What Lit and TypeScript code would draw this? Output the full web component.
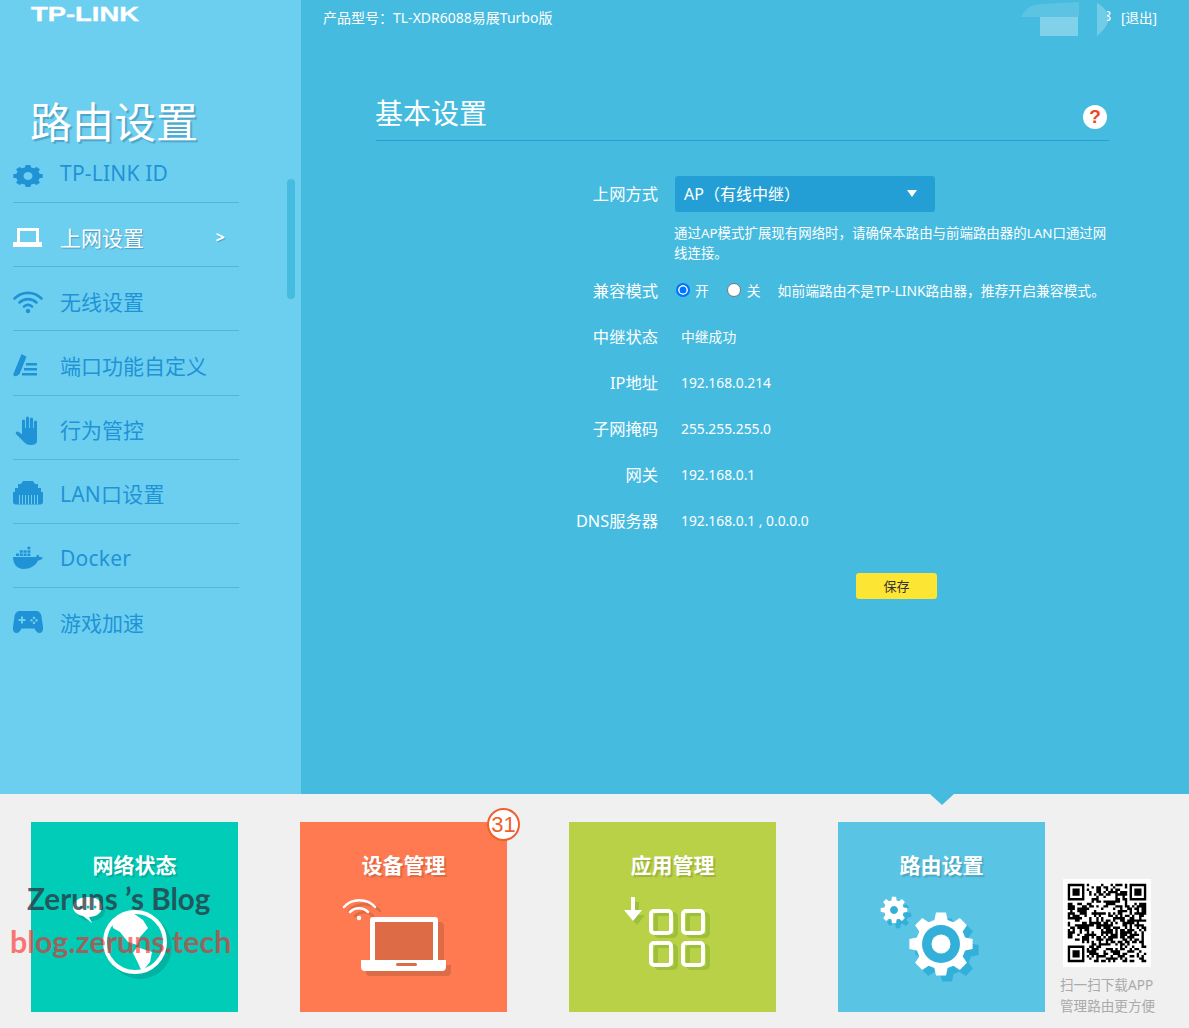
import { LitElement, html, css, svg } from 'lit';
import { customElement } from 'lit/decorators.js';

// toothed wheel outline, centre cut out by the caller
function gear(cx: number, cy: number, r: number, root: number, teeth: number, sy = 1) {
  const step = (Math.PI * 2) / teeth;
  let d = '';
  for (let i = 0; i < teeth; i++) {
    const a = i * step - Math.PI / 2;
    const pts: [number, number][] = [
      [root, a - step * 0.34],
      [r, a - step * 0.2],
      [r, a + step * 0.2],
      [root, a + step * 0.34],
    ];
    for (const [rad, t] of pts) {
      const x = cx + rad * Math.cos(t);
      const y = cy + rad * Math.sin(t) * sy;
      d += (d ? 'L' : 'M') + x.toFixed(1) + ' ' + y.toFixed(1);
    }
  }
  return d + 'Z';
}

function qrModules() {
  const n = 33;
  let seed = 4127;
  let d = '';
  const finder = (x: number, y: number) => x < 8 && y < 8;
  for (let y = 0; y < n; y++) {
    for (let x = 0; x < n; x++) {
      if (finder(x, y) || finder(n - 1 - x, y) || finder(x, n - 1 - y)) continue;
      seed = (seed * 1103515245 + 12345) & 0x7fffffff;
      if ((seed >> 16) % 100 < 52) d += `M${x} ${y}h1v1h-1z`;
    }
  }
  const eye = (x: number, y: number) =>
    `M${x} ${y}h7v7h-7zM${x + 1} ${y + 1}v5h5v-5zM${x + 2} ${y + 2}h3v3h-3z`;
  return d + eye(0, 0) + eye(n - 7, 0) + eye(0, n - 7);
}

const menuIcons = {
  id: svg`<path fill-rule="evenodd" d="${gear(15, 15, 15, 12, 8, 0.74)} M15 11a4.500 4 0 1 0 .01 0Z"/>`,
  net: svg`<path fill-rule="evenodd" d="M4 3h22v14h3v5H0v-5h4ZM7 6v11h16V6Z"/>`,
  wifi: svg`<g fill="none" stroke="currentColor" stroke-width="2.6" stroke-linecap="round">
    <path d="M1.5 9.5C9 2 21 2 28.5 9.5"/><path d="M6.5 13.5c5-4.5 12-4.5 17 0"/><path d="M11 17.5c2.500-2 5.500-2 8 0"/></g>
    <circle cx="15" cy="22" r="2.200"/>`,
  port: svg`<path d="M8.500 1l5 2.800L7 20c-.8 2-3 3.200-5 3.200-1.200 0-2-1-1.500-2.500Z"/><path d="M13 10h11v2.500H13ZM11 15h13v2.500H11ZM9 20h15v2.500H9Z"/>`,
  hand: svg`<g transform="translate(0 -2)"><g fill="none" stroke="currentColor" stroke-width="3.100" stroke-linecap="round">
    <path d="M10.500 15V6"/><path d="M14.500 14V3"/><path d="M18.500 14V4"/><path d="M22.500 15V7"/></g>
    <path d="M9 13h15v14c-1 2-3 3-6 3-3.500 0-5.500-1-7.500-3.500L3 19c-1-1.500 1-3.500 3-2l3 2.500Z"/></g>`,
  lan: svg`<path fill-rule="evenodd" d="M10 0h10l2 3h3v4h3v4h2v10c0 1.500-1 2.500-2.500 2.500H2.500C1 23.500 0 22.500 0 21V11h2V7h3V3h3Z"/>
    <path fill="#6dcff0" d="M6 14h1v9H6ZM9 14h1v9H9ZM12 14h1v9h-1ZM15 14h1v9h-1ZM18 14h1v9h-1ZM21 14h1v9h-1ZM24 14h1v9h-1Z"/>`,
  docker: svg`<path d="M0 11h23c.5-1.500 1.500-2.500 2.500-2.500l.6 2.200 3.900.8c-1 2-3 2.800-5 3C22.500 20 17 23 10.500 23 4 23 0 18 0 11Z"/>
    <path d="M3 7.500h3V10H3ZM6.800 7.500h3V10h-3ZM10.600 7.500h3V10h-3ZM14.400 7.500h3V10h-3ZM6.800 4.200h3v2.500h-3ZM10.600 4.200h3v2.500h-3ZM14.400 4.200h3v2.500h-3ZM14.400.8h3v2.500h-3Z"/>`,
  game: svg`<path fill-rule="evenodd" d="M7 1h16c3 0 5 2 5.500 5L30 17c.4 3.500-1 6-3.500 6-2 0-3.500-1.500-5-4.500h-13C7 21.500 5.500 23 3.500 23 1 23-.4 20.500 0 17L1.500 6C2 3 4 1 7 1ZM8 6.500V9H5.500v2H8v2.500h2V11h2.500V9H10V6.500ZM21 6.500a1.300 1.300 0 1 0 .01 0ZM21 11.500a1.300 1.300 0 1 0 .01 0ZM18.500 9a1.300 1.300 0 1 0 .01 0ZM23.500 9a1.300 1.300 0 1 0 .01 0Z"/>`,
};

const menu = [
  { key: 'id', label: 'TP-LINK ID', cls: 'first latin' },
  { key: 'net', label: '上网设置', cls: 'active' },
  { key: 'wifi', label: '无线设置', cls: '' },
  { key: 'port', label: '端口功能自定义', cls: '' },
  { key: 'hand', label: '行为管控', cls: '' },
  { key: 'lan', label: 'LAN口设置', cls: 'latin' },
  { key: 'docker', label: 'Docker', cls: 'latin' },
  { key: 'game', label: '游戏加速', cls: 'last' },
] as const;

const infoRows = [
  ['中继状态', '中继成功'],
  ['IP地址', '192.168.0.214'],
  ['子网掩码', '255.255.255.0'],
  ['网关', '192.168.0.1'],
  ['DNS服务器', '192.168.0.1 , 0.0.0.0'],
];

const cardArt = {
  status: svg`
    <g fill="#00b3a2"><circle cx="109" cy="67" r="32"/><ellipse cx="60" cy="31" rx="14" ry="10"/></g>
    <circle cx="104" cy="62" r="30" fill="#00ccb8" stroke="#fff" stroke-width="4"/>
    <path fill="#fff" d="M57 17c8 0 14 4 14 10s-6 10-13 10l3 6-9-7c-6-1-10-5-10-9 0-6 7-10 15-10Z"/>
    <g fill="#00ccb8"><circle cx="50" cy="27" r="1.500"/><circle cx="57" cy="27" r="1.500"/><circle cx="64" cy="27" r="1.500"/></g>
    <path fill="#fff" d="M81 43L89 35 102 33 112 40 117 48 109 57 106 65 97 62 89 52 82 48Z"/>
    <path fill="#fff" d="M106 67L121 72 119 82 111 92 107 83 102 73Z"/>`,
  device: svg`
    <g fill="#dd6b45"><path fill-rule="evenodd" d="M78 42h62a4 4 0 0 1 4 4v39h7v7a4 4 0 0 1-4 4H70a4 4 0 0 1-4-4v-7h8V46a4 4 0 0 1 4-4Z"/></g>
    <g fill="none" stroke="#dd6b45" stroke-width="2.500" stroke-linecap="round"><path d="M49 31c8-9 23-9 31 0"/><path d="M55 36c5-5 13-5 18 0"/></g>
    <g fill="none" stroke="#fff" stroke-width="2.500" stroke-linecap="round"><path d="M44 27c8-9 23-9 31 0"/><path d="M50 32c5-5 13-5 18 0"/></g>
    <circle cx="59" cy="38" r="2.200" fill="#fff"/>
    <path fill="#fff" fill-rule="evenodd" d="M73 37h62a3 3 0 0 1 3 3v40h8v7a4 4 0 0 1-4 4H65a4 4 0 0 1-4-4v-7h9V40a3 3 0 0 1 3-3ZM75 42v38h58V42Z"/>
    <rect x="75" y="42" width="58" height="38" fill="#dd6b45"/>
    <rect x="96" y="83" width="21" height="3" rx="1.500" fill="#dd6b45"/>`,
  apps: svg`
    <g fill="none" stroke="#9cc039" stroke-width="4">
      <rect x="87" y="34" width="20" height="22" rx="3"/><rect x="119" y="34" width="20" height="22" rx="3"/>
      <rect x="87" y="66" width="20" height="22" rx="3"/><rect x="119" y="66" width="20" height="22" rx="3"/></g>
    <path fill="#9cc039" d="M66 22h4v13h6l-8 10-9-10h7Z"/>
    <g fill="none" stroke="#fff" stroke-width="4">
      <rect x="82" y="31" width="20" height="22" rx="3"/><rect x="114" y="31" width="20" height="22" rx="3"/>
      <rect x="82" y="63" width="20" height="22" rx="3"/><rect x="114" y="63" width="20" height="22" rx="3"/></g>
    <path fill="#fff" d="M62 17h4v13h7l-9 11-9-11h7Z"/>`,
  router: svg`
    <path fill="#33b0da" d="${gear(109, 70, 32, 25, 8)}"/>
    <path fill="#33b0da" d="${gear(60, 35, 13.500, 10, 8)}"/>
    <path fill="#fff" fill-rule="evenodd" d="${gear(56, 30, 13.500, 10, 8)} M56 26a4 4 0 1 0 .01 0Z"/>
    <path fill="#fff" d="${gear(103, 64, 32, 25, 8)}"/>
    <circle cx="103" cy="64" r="19" fill="#33b0da"/>
    <circle cx="103" cy="64" r="9.500" fill="#fff"/>`,
};

const cards = [
  { key: 'status', title: '网络状态', cls: 'teal' },
  { key: 'device', title: '设备管理', cls: 'orange', badge: '31' },
  { key: 'apps', title: '应用管理', cls: 'lime' },
  { key: 'router', title: '路由设置', cls: 'sky', current: true },
] as const;

@customElement('app-root')
export class AppRoot extends LitElement {
  static styles = css`
    :host {
      display: block;
      position: relative;
      width: 1189px;
      height: 1028px;
      overflow: hidden;
      font-family: "Noto Sans", "Noto Sans CJK SC", sans-serif;
      background: #f0f0f0;
    }
    .main {
      display: flex;
      height: 794px;
      background: #45bbdf;
      color: #fff;
    }
    .side {
      position: relative;
      width: 301px;
      flex: none;
      background: #6dcff0;
      box-sizing: border-box;
      padding: 0 62px 0 13px;
    }
    .logo {
      margin: 4px 0 0 18px;
      height: 22px;
      font: 700 18px/22px "Liberation Sans", sans-serif;
      -webkit-text-stroke: 0.3px #fff;
      transform: scale(1.52, 1.08);
      transform-origin: 0 50%;
      white-space: nowrap;
    }
    .side-title {
      margin: 66px 0 0 17px;
      font-size: 42px;
      line-height: 60px;
      text-shadow: 2px 2px 1px rgba(0, 70, 110, 0.3);
    }
    .menu-row {
      display: flex;
      align-items: center;
      height: 64.2px;
      box-sizing: border-box;
      border-bottom: 1px solid #45bbdf;
      color: #1f93d6;
      font-size: 21px;
      padding-top: 4px;
    }
    .menu-row.first {
      height: 51px;
      padding-top: 0;
      padding-bottom: 8px;
    }
    .menu-row.last {
      border-bottom: none;
    }
    .menu-row.latin {
      letter-spacing: 0.2px;
    }
    .menu-row svg {
      width: 30px;
      height: 24px;
      margin-right: 17px;
      fill: currentColor;
      flex: none;
      overflow: visible;
    }
    .menu-row.active {
      color: #fff;
      text-shadow: 1px 1px 1px rgba(0, 70, 110, 0.35);
    }
    .caret {
      margin-left: auto;
      margin-right: 14px;
      font-size: 16px;
      font-weight: 700;
    }
    .thumb {
      position: absolute;
      left: 287px;
      top: 179px;
      width: 8px;
      height: 120px;
      border-radius: 4px;
      background: #45bbdf;
    }
    .content {
      flex: 1;
      min-width: 0;
      padding: 0 80px 0 22px;
    }
    .topbar {
      position: relative;
      display: flex;
      align-items: center;
      height: 34px;
      font-size: 14px;
    }
    .topbar .right {
      margin-left: auto;
      margin-right: -48px;
      display: flex;
      gap: 10px;
      font-size: 13.5px;
    }
    .clip {
      width: 4px;
      overflow: hidden;
      direction: rtl;
    }
    .deco {
      position: absolute;
      left: 697px;
      top: 0;
      width: 90px;
      height: 36px;
    }
    .heading {
      display: flex;
      align-items: flex-start;
      justify-content: space-between;
      margin: 55px 0 0 53px;
      height: 45px;
      padding-bottom: 6px;
      border-bottom: 1px solid #249fd6;
      font-size: 28px;
    }
    .heading .name {
      line-height: 49px;
      margin-left: -1px;
    }
    .help {
      width: 24px;
      height: 24px;
      margin: 16px 2px 0 0;
      border-radius: 50%;
      background: #fff;
      color: #f1461c;
      font: 700 19px/24px "Liberation Sans", sans-serif;
      text-align: center;
    }
    .form {
      display: grid;
      grid-template-columns: 335px 1fr;
      column-gap: 17px;
      margin-top: 35px;
      font-size: 13.8px;
      align-items: center;
    }
    .form .label {
      text-align: right;
      font-size: 16.3px;
      line-height: 22px;
    }
    .select {
      display: flex;
      align-items: center;
      justify-content: space-between;
      width: 260px;
      height: 36px;
      box-sizing: border-box;
      padding: 0 18px 2px 9px;
      background: #249fd6;
      border-radius: 3px;
      font-size: 16px;
    }
    .arrow {
      width: 0;
      height: 0;
      border-left: 5px solid transparent;
      border-right: 5px solid transparent;
      border-top: 7px solid #fff;
    }
    .hint {
      grid-column: 2;
      font-size: 13.45px;
      line-height: 20px;
      margin: 11px 0 0 -1px;
      width: 436px;
      height: 45px;
    }
    .radio-row {
      display: flex;
      align-items: center;
      height: 46px;
      padding-bottom: 2px;
      box-sizing: border-box;
      font-size: 13.8px;
      white-space: nowrap;
    }
    .radio {
      flex: none;
      width: 14px;
      height: 14px;
      margin-left: 1px;
      box-sizing: border-box;
      border-radius: 50%;
      background: #fff;
      border: 1px solid #777;
    }
    .radio.on {
      border: 2px solid #0075ff;
      background: #0075ff;
      box-shadow: inset 0 0 0 1.5px #fff;
    }
    .radio-on-text {
      margin: 0 17px 0 5px;
    }
    .radio-off-text {
      margin: 0 17px 0 6px;
    }
    .form .info {
      height: 46px;
      line-height: 46px;
      padding-left: 6px;
    }
    .form .info-label {
      line-height: 46px;
    }
    .save {
      grid-column: 2;
      width: 81px;
      height: 26px;
      margin: 29px 0 0 181px;
      border-radius: 3px;
      background: #fde534;
      color: #333;
      font-size: 13px;
      line-height: 26px;
      text-align: center;
    }
    .dock {
      position: relative;
      display: flex;
      height: 234px;
      padding: 28px 0 0 31px;
      box-sizing: border-box;
      gap: 62px;
    }
    .card {
      position: relative;
      flex: none;
      width: 207px;
      height: 190px;
      color: #fff;
    }
    .card h3 {
      margin: 0;
      padding-top: 29px;
      height: 29px;
      line-height: 28px;
      font-size: 21px;
      font-weight: 700;
      text-align: center;
      text-shadow: 2px 2px 1px rgba(0, 0, 0, 0.15);
    }
    .card svg {
      display: block;
      width: 207px;
      height: 132px;
    }
    .teal { background: #00ccb8; }
    .orange { background: #ff7a50; }
    .lime { background: #b8d147; }
    .sky { background: #59c4e4; }
    .badge {
      position: absolute;
      right: -13px;
      top: -14px;
      width: 33px;
      height: 33px;
      box-sizing: border-box;
      border: 2px solid #f0602c;
      border-radius: 50%;
      background: #fff;
      color: #f0602c;
      font: 22px/29px "Liberation Sans", sans-serif;
      text-align: center;
    }
    .pointer {
      position: absolute;
      left: 92px;
      top: -28px;
      width: 0;
      height: 0;
      border-left: 12px solid transparent;
      border-right: 12px solid transparent;
      border-top: 11px solid #45bbdf;
    }
    .app-promo {
      position: absolute;
      left: 1060px;
      top: 85px;
      color: #aaa;
      font-size: 13.6px;
      line-height: 21px;
    }
    .qr {
      display: block;
      width: 88px;
      height: 88px;
      margin: 0 0 7px 3px;
      background: #fff;
    }
    .mark {
      position: absolute;
      font-family: Lato, sans-serif;
      font-size: 29.7px;
      font-weight: 700;
      line-height: 40px;
      white-space: nowrap;
    }
    .mark.one {
      left: 27px;
      top: 879px;
      color: rgba(45, 50, 60, 0.75);
    }
    .mark.two {
      left: 10px;
      top: 921px;
      font-size: 30.5px;
      color: rgba(255, 32, 32, 0.6);
    }
  `;

  render() {
    return html`
      <div class="main">
        <aside class="side">
          <div class="logo">TP-LINK</div>
          <div class="side-title">路由设置</div>
          ${menu.map(
            (m) => html`
              <div class="menu-row ${m.cls}">
                <svg viewBox="0 0 30 24">${menuIcons[m.key]}</svg>
                ${m.label}
                ${m.cls === 'active' ? html`<span class="caret">&gt;</span>` : ''}
              </div>
            `
          )}
          <div class="thumb"></div>
        </aside>
        <section class="content">
          <div class="topbar">
            <span>产品型号：TL-XDR6088易展Turbo版</span>
            <div class="right"><span class="clip">8</span><span>[退出]</span></div>
            <svg class="deco" viewBox="0 0 90 36">
              <path fill="#fff" opacity=".13" d="M1 17C6 7 14 4 21 4L59 2v15H1Z"/>
              <rect x="20" y="17" width="38" height="19" fill="#fff" opacity=".32"/>
              <path fill="#fff" opacity=".25" d="M77 3c7 4 11 9 12 15-1 7-6 13-12 18Z"/>
            </svg>
          </div>
          <div class="heading"><span class="name">基本设置</span><span class="help">?</span></div>
          <div class="form">
            <div class="label">上网方式</div>
            <div class="select"><span>AP（有线中继）</span><span class="arrow"></span></div>
            <div class="hint">通过AP模式扩展现有网络时，请确保本路由与前端路由器的LAN口通过网线连接。</div>
            <div class="label">兼容模式</div>
            <div class="radio-row">
              <span class="radio on"></span><span class="radio-on-text">开</span>
              <span class="radio"></span><span class="radio-off-text">关</span>
              <span>如前端路由不是TP-LINK路由器，推荐开启兼容模式。</span>
            </div>
            ${infoRows.map(
              ([k, v]) => html`<div class="label info-label">${k}</div><div class="info">${v}</div>`
            )}
            <div class="save">保存</div>
          </div>
        </section>
      </div>
      <div class="dock">
        ${cards.map(
          (c) => html`
            <div class="card ${c.cls}">
              <h3>${c.title}</h3>
              <svg viewBox="0 0 207 132">${cardArt[c.key]}</svg>
              ${'badge' in c ? html`<span class="badge">${c.badge}</span>` : ''}
              ${'current' in c ? html`<span class="pointer"></span>` : ''}
            </div>
          `
        )}
        <div class="app-promo">
          <svg class="qr" viewBox="-2 -2 37 37"><path d="${qrModules()}" fill-rule="evenodd"/></svg>
          扫一扫下载APP<br />管理路由更方便
        </div>
      </div>
      <div class="mark one">Zeruns ’s Blog</div>
      <div class="mark two">blog.zeruns.tech</div>
    `;
  }
}
